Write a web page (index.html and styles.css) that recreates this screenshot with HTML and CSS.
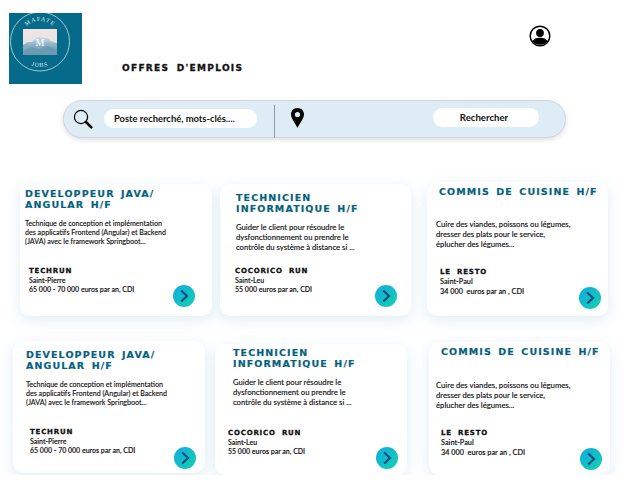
FILE: index.html
```html
<!DOCTYPE html>
<html lang="fr">
<head>
  <meta charset="UTF-8" />
  <meta name="viewport" content="width=device-width, initial-scale=1.0"/>
  <title>Mafate Jobs - Offres d'emplois</title>
  <link rel="stylesheet" href="styles.css">
</head>
<body>

<header class="top">
  <svg class="logo" viewBox="0 0 73 71" width="73" height="71" role="img" aria-label="Mafate Jobs">
    <defs>
      <linearGradient id="sky" x1="0" y1="0" x2="0" y2="1">
        <stop offset="0" stop-color="#f4e3df"/>
        <stop offset="0.5" stop-color="#e6e6e8"/>
        <stop offset="1" stop-color="#b9cfdb"/>
      </linearGradient>
      <linearGradient id="ridge" x1="0" y1="0" x2="0" y2="1">
        <stop offset="0" stop-color="#dbe6ec"/>
        <stop offset="0.45" stop-color="#8fb2c5"/>
        <stop offset="1" stop-color="#6a9ab2"/>
      </linearGradient>
      <path id="arc-top" d="M11 28 A20 20 0 0 1 51 28"/>
      <path id="arc-bottom" d="M5 28 A26 26 0 0 0 57 28"/>
    </defs>
    <rect width="73" height="71" fill="#066a8b"/>
    <circle cx="31" cy="28.5" r="29.5" fill="none" stroke="#dcebf0" stroke-width="0.7"/>
    <rect x="14" y="16" width="34" height="26" fill="url(#sky)"/>
    <path d="M14 32 L19 29 L23 29 L27 25 L31 23 L34 25 L38 25 L42 28 L48 30 V42 H14 Z" fill="url(#ridge)"/>
    <path d="M14 38 L22 34 L30 36 L38 33 L48 36 V42 H14 Z" fill="#6b9bb3"/>
    <text class="logo-m" x="31" y="32.5" text-anchor="middle">M</text>
    <text class="logo-text" text-anchor="middle"><textPath href="#arc-top" startOffset="50%">MAFATE</textPath></text>
    <text class="logo-text" text-anchor="middle"><textPath href="#arc-bottom" startOffset="50%">JOBS</textPath></text>
  </svg>
  <h1 class="page-title">OFFRES D'EMPLOIS</h1>
  <a class="account" href="#" aria-label="Mon compte">
    <svg viewBox="0 0 22 22" width="22" height="22">
      <circle cx="11" cy="11" r="9.8" fill="#fff" stroke="#000" stroke-width="1.5"/>
      <circle cx="11" cy="8" r="3.9" fill="#000"/>
      <path d="M3.6 16.5 C4.5 13.6 7.5 12.8 11 12.8 C14.5 12.8 17.5 13.6 18.4 16.5 C16.6 18.7 14 19.8 11 19.8 C8 19.8 5.4 18.7 3.6 16.5 Z" fill="#000"/>
    </svg>
  </a>
</header>

<form class="search">
  <svg class="search-icon" viewBox="0 0 20 20" width="20" height="20">
    <circle cx="8" cy="8" r="6.6" fill="none" stroke="#000" stroke-width="1.2"/>
    <path d="M13 13 L18.3 18.3" stroke="#000" stroke-width="2.6" stroke-linecap="round"/>
  </svg>
  <div class="search-field">Poste recherché, mots-clés....</div>
  <div class="search-divider"></div>
  <svg class="search-pin" viewBox="0 0 13 20" width="13" height="20">
    <path fill-rule="evenodd" d="M6.5 0 C10.2 0 13 2.8 13 6.4 C13 10.4 9 14.5 6.5 20 C4 14.5 0 10.4 0 6.4 C0 2.8 2.8 0 6.5 0 Z M6.5 3.9 A2.6 2.6 0 1 0 6.5 9.1 A2.6 2.6 0 1 0 6.5 3.9 Z" fill="#000"/>
  </svg>
  <button class="search-btn" type="button">Rechercher</button>
</form>

<main class="offers">
  <div class="offers-row row-one">
    <article class="card card-dev-a">
      <h2 class="card-title">DEVELOPPEUR JAVA/<br>ANGULAR H/F</h2>
      <p class="card-desc">Technique de conception et implémentation<br>des applicatifs Frontend (Angular) et Backend<br>(JAVA) avec le framework Springboot...</p>
      <div class="card-foot">
        <div class="card-info">
          <h3 class="company">TECHRUN</h3>
          <div>Saint-Pierre</div>
          <div>65 000 - 70 000 euros par an, CDI</div>
        </div>
        <a class="go" href="#"><svg viewBox="0 0 22 22" width="22" height="22"><path d="M8.2 5.5 L14 11 L8.2 16.5" /></svg></a>
      </div>
    </article>

    <article class="card card-tech-a">
      <h2 class="card-title">TECHNICIEN<br>INFORMATIQUE H/F</h2>
      <p class="card-desc">Guider le client pour résoudre le<br>dysfonctionnement ou prendre le<br>contrôle du système à distance si ...</p>
      <div class="card-foot">
        <div class="card-info">
          <h3 class="company">COCORICO RUN</h3>
          <div>Saint-Leu</div>
          <div>55 000 euros par an, CDI</div>
        </div>
        <a class="go" href="#"><svg viewBox="0 0 22 22" width="22" height="22"><path d="M8.2 5.5 L14 11 L8.2 16.5" /></svg></a>
      </div>
    </article>

    <article class="card card-cook-a">
      <h2 class="card-title">COMMIS DE CUISINE H/F</h2>
      <p class="card-desc">Cuire des viandes, poissons ou légumes,<br>dresser des plats pour le service,<br>éplucher des légumes...</p>
      <div class="card-foot">
        <div class="card-info">
          <h3 class="company">LE RESTO</h3>
          <div>Saint-Paul</div>
          <div>34 000&nbsp; euros par an , CDI</div>
        </div>
        <a class="go" href="#"><svg viewBox="0 0 22 22" width="22" height="22"><path d="M8.2 5.5 L14 11 L8.2 16.5" /></svg></a>
      </div>
    </article>
  </div>

  <div class="offers-row row-two">
    <article class="card card-dev-b">
      <h2 class="card-title">DEVELOPPEUR JAVA/<br>ANGULAR H/F</h2>
      <p class="card-desc">Technique de conception et implémentation<br>des applicatifs Frontend (Angular) et Backend<br>(JAVA) avec le framework Springboot...</p>
      <div class="card-foot">
        <div class="card-info">
          <h3 class="company">TECHRUN</h3>
          <div>Saint-Pierre</div>
          <div>65 000 - 70 000 euros par an, CDI</div>
        </div>
        <a class="go" href="#"><svg viewBox="0 0 22 22" width="22" height="22"><path d="M8.2 5.5 L14 11 L8.2 16.5" /></svg></a>
      </div>
    </article>

    <article class="card card-tech-b">
      <h2 class="card-title">TECHNICIEN<br>INFORMATIQUE H/F</h2>
      <p class="card-desc">Guider le client pour résoudre le<br>dysfonctionnement ou prendre le<br>contrôle du système à distance si ...</p>
      <div class="card-foot">
        <div class="card-info">
          <h3 class="company">COCORICO RUN</h3>
          <div>Saint-Leu</div>
          <div>55 000 euros par an, CDI</div>
        </div>
        <a class="go" href="#"><svg viewBox="0 0 22 22" width="22" height="22"><path d="M8.2 5.5 L14 11 L8.2 16.5" /></svg></a>
      </div>
    </article>

    <article class="card card-cook-b">
      <h2 class="card-title">COMMIS DE CUISINE H/F</h2>
      <p class="card-desc">Cuire des viandes, poissons ou légumes,<br>dresser des plats pour le service,<br>éplucher des légumes...</p>
      <div class="card-foot">
        <div class="card-info">
          <h3 class="company">LE RESTO</h3>
          <div>Saint-Paul</div>
          <div>34 000&nbsp; euros par an , CDI</div>
        </div>
        <a class="go" href="#"><svg viewBox="0 0 22 22" width="22" height="22"><path d="M8.2 5.5 L14 11 L8.2 16.5" /></svg></a>
      </div>
    </article>
  </div>
</main>

</body>
</html>
```

FILE: styles.css
```css
body {
  margin: 0;
  background: #fff;
  color: #111;
  font-family: "Lato", "Open Sans", sans-serif;
  overflow: hidden;
}

/* header */
.top {
  display: flex;
  align-items: flex-start;
  height: 100px;
}
.logo {
  display: block;
  margin: 13px 0 0 9px;
  flex: none;
}
.logo-text {
  font-family: "Liberation Serif", serif;
  font-size: 6px;
  letter-spacing: 1px;
  fill: #dcebf0;
}
.logo-m {
  font-family: "Liberation Serif", serif;
  font-size: 10px;
  fill: #fff;
}
.page-title {
  margin: 63px 0 0 40px;
  font-family: "DejaVu Sans", sans-serif;
  font-size: 9px;
  font-weight: 700;
  line-height: 10px;
  letter-spacing: 1.3px;
  word-spacing: 3px;
  white-space: nowrap;
  color: #111;
  -webkit-text-stroke: 0.3px #111;
}
.account {
  display: block;
  margin: 25px 0 0 286px;
  height: 22px;
}

/* search bar */
.search {
  display: flex;
  align-items: flex-start;
  box-sizing: border-box;
  width: 503px;
  height: 38px;
  margin-left: 63px;
  background: #deedf5;
  border: 1px solid #d9d3de;
  border-radius: 19px;
  box-shadow: 0 2px 4px rgba(120, 130, 150, 0.25);
}
.search-icon {
  margin: 8px 0 0 9px;
  flex: none;
}
.search-field {
  box-sizing: border-box;
  width: 153px;
  height: 19px;
  margin: 8px 0 0 11px;
  padding-left: 10px;
  background: #fff;
  border-radius: 10px;
  font-size: 9.4px;
  font-weight: 700;
  line-height: 19px;
  white-space: nowrap;
}
.search-divider {
  width: 1px;
  height: 33px;
  margin: 4px 0 0 17px;
  background: #8f9ba3;
}
.search-pin {
  margin: 7px 0 0 16px;
  flex: none;
}
.search-btn {
  width: 106px;
  height: 19px;
  margin: 7px 0 0 129px;
  padding: 0 4px 0 0;
  background: #fff;
  border: none;
  border-radius: 10px;
  color: #111;
  font-family: inherit;
  font-size: 9.6px;
  font-weight: 700;
}

/* offers */
.offers-row {
  display: flex;
  align-items: flex-start;
}
.row-one {
  margin-top: 46px;
}
.row-two {
  margin-top: 25px;
}
.card {
  display: flex;
  flex-direction: column;
  box-sizing: border-box;
  flex: none;
  background: #fff;
  border-radius: 10px;
  box-shadow: 0 4px 14px rgba(150, 195, 215, 0.3);
}
.card-title {
  margin: var(--title-y) 0 0 var(--title-x);
  font-family: "DejaVu Sans", sans-serif;
  font-size: 9.5px;
  font-weight: 700;
  line-height: 11px;
  letter-spacing: 1.1px;
  word-spacing: 2px;
  white-space: nowrap;
  color: #05627f;
  -webkit-text-stroke: 0.2px #05627f;
}
.card-desc {
  margin: var(--desc-y) 0 0 var(--desc-x);
  font-size: var(--desc-size);
  font-weight: 500;
  line-height: var(--desc-lh);
  white-space: nowrap;
  -webkit-text-stroke: 0.1px #111;
}
.card-foot {
  display: flex;
  justify-content: space-between;
  align-items: flex-end;
  margin-top: auto;
  padding: 0 var(--foot-r) var(--foot-b) var(--foot-x);
}
.card-info {
  margin-bottom: var(--info-b);
  font-size: var(--info-size);
  font-weight: 600;
  line-height: var(--info-lh);
  white-space: nowrap;
  -webkit-text-stroke: 0.1px #111;
}
.company {
  margin: 0;
  font-family: "DejaVu Sans", sans-serif;
  font-size: 7px;
  font-weight: 700;
  line-height: 10px;
  letter-spacing: 0.8px;
  word-spacing: 3px;
  color: #111;
  -webkit-text-stroke: 0.3px #111;
}
.go {
  display: block;
  width: 22px;
  height: 22px;
  border-radius: 50%;
  background: linear-gradient(135deg, #12aae2, #12d2ae);
}
.go svg {
  display: block;
  fill: none;
  stroke: #0e4f7e;
  stroke-width: 2.2;
}

/* each card sits a little off the grid in the mockup */
.card-dev-a {
  width: 192px;
  height: 132px;
  margin: 0 8px 0 20px;
  --title-x: 5px; --title-y: 4px;
  --desc-x: 5px; --desc-y: 9px; --desc-lh: 9px; --desc-size: 7.1px;
  --foot-x: 9px; --foot-b: 9px; --foot-r: 17px;
  --info-b: 13px; --info-lh: 9px; --info-size: 7px;
}
.card-tech-a {
  width: 191px;
  height: 132px;
  margin: 0 16px 0 0;
  --title-x: 16px; --title-y: 8px;
  --desc-x: 16px; --desc-y: 8px; --desc-lh: 10px; --desc-size: 7.7px;
  --foot-x: 15px; --foot-b: 9px; --foot-r: 14px;
  --info-b: 13px; --info-lh: 9px; --info-size: 7px;
}
.card-cook-a {
  width: 181px;
  height: 134px;
  margin-top: -2px;
  --title-x: 12px; --title-y: 4px;
  --desc-x: 9px; --desc-y: 22px; --desc-lh: 10px; --desc-size: 7.7px;
  --foot-x: 13px; --foot-b: 7px; --foot-r: 7px;
  --info-b: 12px; --info-lh: 10px; --info-size: 7.3px;
}
.card-dev-b {
  width: 192px;
  height: 132px;
  margin: 0 10px 0 13px;
  --title-x: 13px; --title-y: 8px;
  --desc-x: 13px; --desc-y: 9px; --desc-lh: 9px; --desc-size: 7.1px;
  --foot-x: 17px; --foot-b: 4px; --foot-r: 9px;
  --info-b: 14px; --info-lh: 9px; --info-size: 7px;
}
.card-tech-b {
  width: 192px;
  height: 131px;
  margin: 3px 22px 0 0;
  --title-x: 18px; --title-y: 3px;
  --desc-x: 18px; --desc-y: 8px; --desc-lh: 10px; --desc-size: 7.7px;
  --foot-x: 13px; --foot-b: 6px; --foot-r: 9px;
  --info-b: 13px; --info-lh: 9px; --info-size: 7px;
}
.card-cook-b {
  width: 181px;
  height: 133px;
  margin-top: 1px;
  --title-x: 12px; --title-y: 4px;
  --desc-x: 7px; --desc-y: 23px; --desc-lh: 10px; --desc-size: 7.7px;
  --foot-x: 12px; --foot-b: 5px; --foot-r: 8px;
  --info-b: 12px; --info-lh: 10px; --info-size: 7.3px;
}
```
